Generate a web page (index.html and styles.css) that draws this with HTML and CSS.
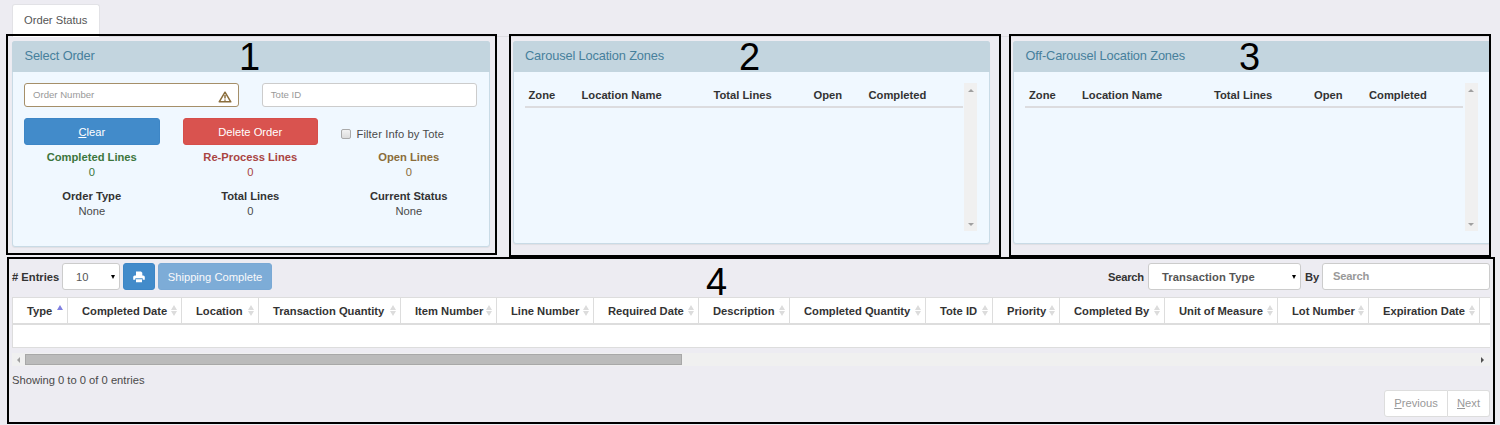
FILE: index.html
```html
<!DOCTYPE html>
<html lang="en">
<head>
<meta charset="utf-8">
<title>Order Status</title>
<link rel="stylesheet" href="styles.css">
</head>
<body>
<div class="page">
  <nav class="tabs"><span class="tab">Order Status</span></nav>

  <div class="panels">
    <section class="panel panel-order">
      <h3 class="panel-heading">Select Order</h3>
      <div class="panel-body">
        <div class="fields">
          <div class="field field-warning"><span>Order Number</span>
            <svg class="warn" width="14" height="12" viewBox="0 0 14 12"><path d="M7 1.2 L12.8 10.8 H1.2 Z" fill="none" stroke="#8a6d3b" stroke-width="1.5" stroke-linejoin="round"/><path d="M7 4 V7.6 M7 8.4 V9.8" stroke="#8a6d3b" stroke-width="1.5"/></svg>
          </div>
          <div class="field"><span>Tote ID</span></div>
        </div>
        <div class="actions">
          <div class="btn btn-primary"><span><u>C</u>lear</span></div>
          <div class="btn btn-danger">Delete Order</div>
          <label class="check"><span class="box"></span>Filter Info by Tote</label>
        </div>
        <div class="stats">
          <div class="stat success"><b>Completed Lines</b><span>0</span></div>
          <div class="stat danger"><b>Re-Process Lines</b><span>0</span></div>
          <div class="stat warning"><b>Open Lines</b><span>0</span></div>
          <div class="stat"><b>Order Type</b><span>None</span></div>
          <div class="stat"><b>Total Lines</b><span>0</span></div>
          <div class="stat"><b>Current Status</b><span>None</span></div>
        </div>
      </div>
    </section>

    <section class="panel">
      <h3 class="panel-heading">Carousel Location Zones</h3>
      <div class="panel-body zone-body">
        <div class="zone-head"><b>Zone</b><b>Location Name</b><b>Total Lines</b><b>Open</b><b>Completed</b></div>
        <div class="vscroll"><i class="up"></i><i class="down"></i></div>
      </div>
    </section>

    <section class="panel">
      <h3 class="panel-heading">Off-Carousel Location Zones</h3>
      <div class="panel-body zone-body">
        <div class="zone-head"><b>Zone</b><b>Location Name</b><b>Total Lines</b><b>Open</b><b>Completed</b></div>
        <div class="vscroll"><i class="up"></i><i class="down"></i></div>
      </div>
    </section>
  </div>

  <div class="toolbar">
    <b class="entries-label"># Entries</b>
    <div class="select select-count"><span>10</span><i class="caret"></i></div>
    <div class="btn btn-primary btn-print">
      <svg width="12" height="12" viewBox="0 0 12 12"><path d="M3 .5 H8 L9.3 1.8 V5 H3 Z M1.8 4.5 H10.2 Q11.8 4.5 11.8 6 V8.7 H9.7 V7.3 H2.3 V8.7 H.2 V6 Q.2 4.5 1.8 4.5 Z M3 8.2 H9 V11.2 H3 Z" fill="#fff"/></svg>
    </div>
    <div class="btn btn-primary btn-ship">Shipping Complete</div>
    <b class="search-label">Search</b>
    <div class="select select-type"><b>Transaction Type</b><i class="caret"></i></div>
    <b class="by-label">By</b>
    <div class="search-input">Search</div>
  </div>

  <div class="grid">
    <div class="grid-head">
      <div class="asc">Type<i></i></div>
      <div>Completed Date<i></i></div>
      <div>Location<i></i></div>
      <div>Transaction Quantity<i></i></div>
      <div>Item Number<i></i></div>
      <div>Line Number<i></i></div>
      <div>Required Date<i></i></div>
      <div>Description<i></i></div>
      <div>Completed Quantity<i></i></div>
      <div>Tote ID<i></i></div>
      <div>Priority<i></i></div>
      <div>Completed By<i></i></div>
      <div>Unit of Measure<i></i></div>
      <div>Lot Number<i></i></div>
      <div>Expiration Date<i></i></div>
      <div class="cut"></div>
    </div>
    <div class="grid-row"></div>
  </div>
  <div class="hscroll"><i class="left"></i><div class="thumb"></div><i class="right"></i></div>

  <div class="info">Showing 0 to 0 of 0 entries</div>
  <div class="pager"><span class="prev"><u>P</u>revious</span><span class="next"><u>N</u>ext</span></div>

  <!-- numbered callouts lying over the interface -->
  <div class="callout c1"><span>1</span></div>
  <div class="callout c2"><span>2</span></div>
  <div class="callout c3"><span>3</span></div>
  <div class="callout c4"><span>4</span></div>
</div>
</body>
</html>
```
FILE: styles.css
```css
* { box-sizing: border-box; }
body { margin: 0; background: #edecf2; }
.page {
  position: relative; width: 1500px; height: 425px; overflow: hidden;
  padding: 4px 10px 0 12px;
  font: 11.2px/16px "Liberation Sans", Arial, sans-serif; color: #4a4a4a;
}
b { color: #333; }

.tabs { display: flex; height: 33px; border-bottom: 1px solid #dddde2; }
.tab {
  width: 88px; height: 33px; padding: 7px 0 0 11px; color: #555; background: #fff;
  border: 1px solid #e2e2e6; border-bottom: 0; border-radius: 3px 3px 0 0;
}

.panels { display: flex; align-items: flex-start; gap: 23px; height: 226px; padding-top: 4px; }
.panel {
  width: 477.5px; height: 203px; flex: none; background: #f0f8ff;
  border: 1px solid #c9dbe6; border-radius: 3px; box-shadow: 0 1px 1px rgba(0,0,0,.06);
}
.panel-order { height: 206px; }
.panel-heading {
  margin: -1px -1px 0; height: 31px; padding-left: 12.5px; border-radius: 3px 3px 0 0;
  background: #c3d5df; color: #47809c; font-size: 12.8px; font-weight: 400; line-height: 30px;
  letter-spacing: -.14px;
}
.panel-body { padding: 11px 12px 0 11px; }

.fields { display: flex; gap: 23px; }
.field {
  display: flex; align-items: center; justify-content: space-between;
  flex: 1; height: 24px; padding: 0 6px 0 8px; background: #fff; color: #999;
  border: 1px solid #ccc; border-radius: 3px; font-size: 9.6px;
}
.field-warning { border-color: #a58f69; }
.warn { margin-top: 3px; }

.actions { display: grid; grid-template-columns: repeat(3, 1fr); column-gap: 23px; margin-top: 11px; }
.btn {
  display: flex; align-items: center; justify-content: center; height: 27px;
  color: #fff; border-radius: 3px; border: 1px solid;
}
.btn-primary { background: #428bca; border-color: #3d86c6; }
.btn-danger { background: #d9534f; border-color: #d64e4a; }
.check { display: flex; align-items: center; padding-top: 5px; letter-spacing: .1px; }
.box {
  width: 10px; height: 10px; margin-right: 5.5px; border: 1px solid #aaa; border-radius: 2px;
  background: linear-gradient(#f2f2f2, #dcdcdc);
}

.stats { display: grid; grid-template-columns: repeat(3, 1fr); column-gap: 23px; row-gap: 8px; margin-top: 4px; }
.stat { display: flex; flex-direction: column; text-align: center; line-height: 15.5px; }
.stat b { position: relative; top: 1px; }
.success, .success b { color: #3c763d; }
.danger, .danger b { color: #a94442; }
.warning, .warning b { color: #8a6d3b; }

.zone-body { display: flex; justify-content: space-between; align-items: flex-start; }
.zone-head {
  display: grid; grid-template-columns: 53px 132px 100px 55px 1fr;
  width: 438px; height: 25px; padding: 4px 0 0 4px; border-bottom: 2px solid #dcdcdf;
}
.vscroll {
  display: flex; flex-direction: column; justify-content: space-between; align-items: center;
  width: 13px; height: 148px; padding: 5px 0; background: #f0f0f0;
}
.up, .down { border: 3px solid transparent; }
.up { border-bottom-color: #a0a0a0; border-top-width: 0; margin-top: 1px; }
.down { border-top-color: #a0a0a0; border-bottom-width: 0; }

.toolbar { display: flex; align-items: center; height: 27px; }
.entries-label { width: 50px; }
.select {
  display: flex; align-items: center; justify-content: space-between; height: 27px;
  background: #fff; border: 1px solid #ccc; border-radius: 3px; color: #555;
}
.select b { color: #555; }
.select-count { width: 58px; padding: 0 4px 0 13px; }
.select-type { width: 153px; padding: 0 4px 0 13px; margin-left: 4px; letter-spacing: .1px; }
.caret { border: 2.5px solid transparent; border-top: 4px solid #000; border-bottom: 0; }
.btn-print { width: 32px; margin-left: 3px; }
.btn-ship { width: 114px; margin-left: 3px; opacity: .65; }
.search-label { margin-left: auto; letter-spacing: -.2px; }
.by-label { width: 17px; margin-left: 4px; }
.search-input {
  width: 168px; height: 27px; padding-left: 10px; background: #fff; border: 1px solid #ccc;
  border-radius: 3px; color: #999; font-weight: 700; line-height: 25px; letter-spacing: -.2px;
}

.grid { margin-top: 7px; background: #fff; border: 1px solid #ddd; border-right: 0; height: 51px; }
.grid-head {
  display: grid; height: 27px; border-bottom: 2px solid #ddd;
  grid-template-columns: 55px 114px 77px 142px 96px 97px 105px 91px 136px 67px 67px 105px 113px 91px 111px 1fr;
  color: #333; font-weight: 700; line-height: 24px;
}
.grid-head div {
  display: flex; justify-content: space-between; align-items: center;
  padding: 0 4px 0 14px; border-right: 1px solid #ddd; white-space: nowrap;
}
.grid-head .cut { padding: 0; border: 0; }
.grid-head i {
  width: 6px; height: 11px; background: #dcdcdc;
  clip-path: polygon(50% 0, 100% 45%, 0 45%, 0 55%, 100% 55%, 50% 100%, 0 55%, 0 45%);
}
.grid-head .asc i { height: 5px; margin-bottom: 6px; background: #8080e0; clip-path: polygon(50% 0, 100% 100%, 0 100%); }

.hscroll { display: flex; align-items: center; height: 13px; margin-top: 5px; background: #f0f0f0; }
.left, .right { border: 3px solid transparent; }
.left { border-right-color: #a0a0a0; border-left-width: 0; margin: 0 5px; }
.right { border-left-color: #505050; border-right-width: 0; margin: 0 6px 0 auto; }
.thumb { width: 657px; height: 11px; background: #bbb; border: 1px solid #a8a8a8; }

.info { margin-top: 6px; }
.pager { display: flex; justify-content: flex-end; margin-top: 2px; color: #999; }
.pager span { height: 27px; background: #fff; border: 1px solid #ddd; text-align: center; line-height: 25px; }
.prev { width: 64px; border-radius: 3px 0 0 3px; }
.pager .next { width: 42px; border-left: 0; border-radius: 0 3px 3px 0; }

.callout { position: absolute; border: 2px solid #000; color: #000; font-size: 38px; line-height: 44px; }
.callout span { position: absolute; }
.c1 { left: 6px; top: 34px; width: 491px; height: 221px; }
.c1 span { left: 231px; top: -1px; }
.c2 { left: 509px; top: 34px; width: 492px; height: 223px; }
.c2 span { left: 228px; top: -1px; }
.c3 { left: 1009px; top: 34px; width: 482px; height: 223px; }
.c3 span { left: 228px; top: -1px; }
.c4 { left: 7px; top: 257px; width: 1488px; height: 167px; }
.c4 span { left: 697px; top: 1px; }
```
